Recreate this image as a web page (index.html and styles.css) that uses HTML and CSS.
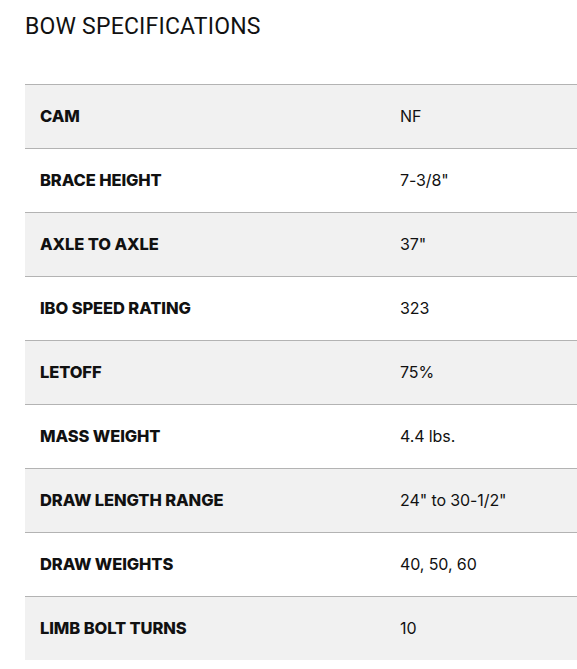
FILE: index.html
```html
<!DOCTYPE html>
<html>
<head>
<meta charset="utf-8">
<link rel="stylesheet" href="styles.css">
</head>
<body>
<section class="specs">
  <h2 class="specs-title">BOW SPECIFICATIONS</h2>
  <div class="specs-table">
    <div class="row alt"><div class="label">CAM</div><div class="value">NF</div></div>
    <div class="row"><div class="label">BRACE HEIGHT</div><div class="value">7-3/8"</div></div>
    <div class="row alt"><div class="label">AXLE TO AXLE</div><div class="value">37"</div></div>
    <div class="row"><div class="label">IBO SPEED RATING</div><div class="value">323</div></div>
    <div class="row alt"><div class="label">LETOFF</div><div class="value">75%</div></div>
    <div class="row"><div class="label">MASS WEIGHT</div><div class="value">4.4 lbs.</div></div>
    <div class="row alt"><div class="label">DRAW LENGTH RANGE</div><div class="value">24" to 30-1/2"</div></div>
    <div class="row"><div class="label">DRAW WEIGHTS</div><div class="value">40, 50, 60</div></div>
    <div class="row alt"><div class="label">LIMB BOLT TURNS</div><div class="value">10</div></div>
  </div>
</section>
</body>
</html>
```
FILE: styles.css
```css
html, body {
  margin: 0;
  padding: 0;
  background: #fff;
}
.specs {
  padding: 0 0 0 25px;
}
.specs-title {
  margin: 0;
  padding-top: 13px;
  height: 84px;
  box-sizing: border-box;
  font-family: Roboto, "Liberation Sans", sans-serif;
  font-weight: 400;
  font-size: 23px;
  line-height: 28px;
  color: #111;
  letter-spacing: 0.2px;
}
.specs-table {
  display: flex;
  flex-direction: column;
}
.row {
  display: grid;
  grid-template-columns: 360px 1fr;
  align-items: center;
  height: 64px;
  box-sizing: border-box;
  border-top: 1px solid #b3b3b3;
  padding-left: 15px;
  padding-bottom: 2px;
  font-family: Inter, "Liberation Sans", sans-serif;
  font-size: 16px;
  color: #111;
}
.row.alt {
  background: #f1f1f1;
}
.label {
  font-size: 16.5px;
  font-weight: 800;
  letter-spacing: -0.1px;
}
.value {
  font-weight: 400;
  letter-spacing: -0.1px;
}
```
